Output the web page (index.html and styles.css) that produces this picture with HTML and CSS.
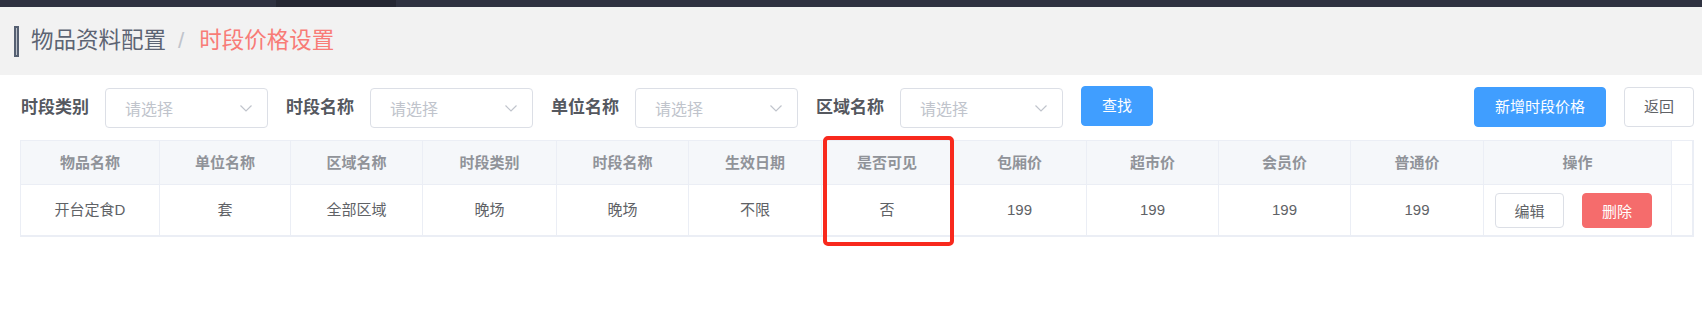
FILE: index.html
```html
<!DOCTYPE html>
<html lang="zh-CN">
<head>
    <meta charset="UTF-8">
    <meta name="viewport" content="width=device-width, initial-scale=1.0">
    <title>时段价格设置</title>
    <link rel="stylesheet" href="styles.css">
</head>
<body>

    <!-- 顶部导航条 -->
    <div class="barra-top">
        <span class="tab-activo"></span>
    </div>

    <!-- 面包屑 -->
    <div class="cabecera">
        <span class="marca"></span>
        <span class="miga">物品资料配置</span>
        <span class="separador">/</span>
        <span class="miga actual">时段价格设置</span>
    </div>

    <!-- 查询条件 -->
    <div class="filtros">
        <div class="campo">
            <label>时段类别</label>
            <div class="select">请选择<svg viewBox="0 0 12 7"><path d="M0.5 0.5 L6 6 L11.5 0.5"/></svg></div>
        </div>
        <div class="campo">
            <label>时段名称</label>
            <div class="select">请选择<svg viewBox="0 0 12 7"><path d="M0.5 0.5 L6 6 L11.5 0.5"/></svg></div>
        </div>
        <div class="campo">
            <label>单位名称</label>
            <div class="select">请选择<svg viewBox="0 0 12 7"><path d="M0.5 0.5 L6 6 L11.5 0.5"/></svg></div>
        </div>
        <div class="campo">
            <label>区域名称</label>
            <div class="select">请选择<svg viewBox="0 0 12 7"><path d="M0.5 0.5 L6 6 L11.5 0.5"/></svg></div>
        </div>
        <button class="btn btn-primario">查找</button>

        <div class="derecha">
            <button class="btn btn-primario btn-nuevo">新增时段价格</button>
            <button class="btn btn-plano">返回</button>
        </div>
    </div>

    <!-- 列表 -->
    <div class="tabla-wrap">
        <table class="tabla">
            <colgroup>
                <col style="width:140px"><col style="width:131px"><col style="width:132px">
                <col style="width:134px"><col style="width:132px"><col style="width:133px">
                <col style="width:131px"><col style="width:134px"><col style="width:132px">
                <col style="width:132px"><col style="width:133px"><col style="width:188px">
                <col style="width:22px">
            </colgroup>
            <thead>
                <tr>
                    <th>物品名称</th>
                    <th>单位名称</th>
                    <th>区域名称</th>
                    <th>时段类别</th>
                    <th>时段名称</th>
                    <th>生效日期</th>
                    <th>是否可见</th>
                    <th>包厢价</th>
                    <th>超市价</th>
                    <th>会员价</th>
                    <th>普通价</th>
                    <th>操作</th>
                    <th class="gutter"></th>
                </tr>
            </thead>
            <tbody>
                <tr>
                    <td>开台定食D</td>
                    <td>套</td>
                    <td>全部区域</td>
                    <td>晚场</td>
                    <td>晚场</td>
                    <td>不限</td>
                    <td>否</td>
                    <td>199</td>
                    <td>199</td>
                    <td>199</td>
                    <td>199</td>
                    <td class="ops">
                        <div class="acciones">
                            <button class="btn-mini">编辑</button>
                            <button class="btn-mini btn-peligro">删除</button>
                        </div>
                    </td>
                    <td class="gutter"></td>
                </tr>
            </tbody>
        </table>
        <div class="marco-rojo"></div>
    </div>

</body>
</html>
```

FILE: styles.css
```css
/* 颜色 */
:root {
    --color-nav: #2f3241;
    --color-nav-activo: #252733;
    --color-cabecera: #f2f2f2;
    --color-texto: #606266;
    --color-label: #55585f;
    --color-gris: #909399;
    --color-placeholder: #c0c4cc;
    --color-borde: #dcdfe6;
    --color-linea: #ebeef5;
    --color-th: #f5f7fa;
    --color-primario: #409eff;
    --color-peligro: #f56c6c;
    --color-miga: #f87c77;
}

body {
    margin: 0;
    padding: 0;
    font-family: "Liberation Sans", "Noto Sans CJK SC", sans-serif;
    color: var(--color-texto);
    background: #fff;
    min-height: 300px;
}

/* 顶部导航条 */
.barra-top {
    height: 7px;
    background: var(--color-nav);
}

.tab-activo {
    display: block;
    margin-left: 276px;
    width: 120px;
    height: 7px;
    background: var(--color-nav-activo);
}

/* 面包屑 */
.cabecera {
    height: 68px;
    background: var(--color-cabecera);
    display: flex;
    align-items: center;
    padding-left: 14px;
    font-size: 22.5px;
    line-height: 30px;
}

.marca {
    width: 1px;
    height: 27px;
    border: 2px solid #566072;
    background: #bcc1ca;
    margin-right: 12px;
}

.miga {
    color: #5d6473;
}

.miga.actual {
    color: var(--color-miga);
}

.separador {
    color: var(--color-placeholder);
    margin: 0 15px 0 12px;
}

/* 查询条件 */
.filtros {
    display: flex;
    align-items: flex-start;
    gap: 18px;
    padding: 11px 8px 0 21px;
}

.campo {
    display: flex;
    align-items: center;
    gap: 16px;
    height: 40px;
    margin-top: 2px;
}

.campo label {
    font-size: 17px;
    font-weight: bold;
    color: var(--color-label);
    line-height: 24px;
}

.select {
    box-sizing: border-box;
    width: 163px;
    height: 40px;
    border: 1px solid var(--color-borde);
    border-radius: 4px;
    padding: 0 15px 0 19px;
    display: flex;
    align-items: center;
    justify-content: space-between;
    font-size: 16px;
    color: var(--color-placeholder);
}

.select svg {
    width: 12px;
    height: 7px;
    fill: none;
    stroke: var(--color-placeholder);
    stroke-width: 1.2;
}

.btn {
    box-sizing: border-box;
    height: 40px;
    padding: 0 20px;
    border-radius: 4px;
    font-family: inherit;
    font-size: 15px;
    line-height: 20px;
    cursor: pointer;
}

.btn-primario {
    background: var(--color-primario);
    border: 1px solid var(--color-primario);
    color: #fff;
}

.btn-plano {
    background: #fff;
    border: 1px solid var(--color-borde);
    color: var(--color-texto);
    padding: 0 19px;
}

.derecha {
    margin-left: auto;
    display: flex;
    gap: 18px;
    margin-top: 1px;
}

/* 列表 */
.tabla-wrap {
    position: relative;
    margin: 12px 0 0 20px;
    width: 1674px;
    padding-bottom: 20px;
}

.tabla {
    width: 1674px;
    table-layout: fixed;
    border-collapse: separate;
    border-spacing: 0;
    font-size: 15px;
}

.tabla th,
.tabla td {
    padding: 0;
    text-align: center;
    border-right: 1px solid var(--color-linea);
    border-bottom: 1px solid var(--color-linea);
}

.tabla th:first-child,
.tabla td:first-child {
    border-left: 1px solid var(--color-linea);
}

.tabla th {
    border-top: 1px solid var(--color-linea);
    background: var(--color-th);
    color: var(--color-gris);
    font-weight: bold;
    line-height: 43px;
}

.tabla td {
    line-height: 50px;
    border-bottom-width: 2px;
}

.tabla .gutter {
    background: #fff;
    border-right-width: 2px;
}

.ops {
    text-align: left;
}

.acciones {
    display: flex;
    align-items: center;
    gap: 18px;
    height: 50px;
    padding-left: 11px;
    line-height: normal;
}

.btn-mini {
    box-sizing: border-box;
    height: 35px;
    width: 69px;
    border: 1px solid var(--color-borde);
    border-radius: 4px;
    background: #fff;
    color: var(--color-texto);
    font-family: inherit;
    font-size: 15px;
    cursor: pointer;
}

.btn-peligro {
    width: 70px;
    background: var(--color-peligro);
    border-color: var(--color-peligro);
    color: #fff;
}

/* 标注框 */
.marco-rojo {
    position: absolute;
    z-index: 2;
    left: 803px;
    top: -4px;
    width: 131px;
    height: 110px;
    box-sizing: border-box;
    border: 4px solid #f8291d;
    border-radius: 5px;
    pointer-events: none;
}
```
